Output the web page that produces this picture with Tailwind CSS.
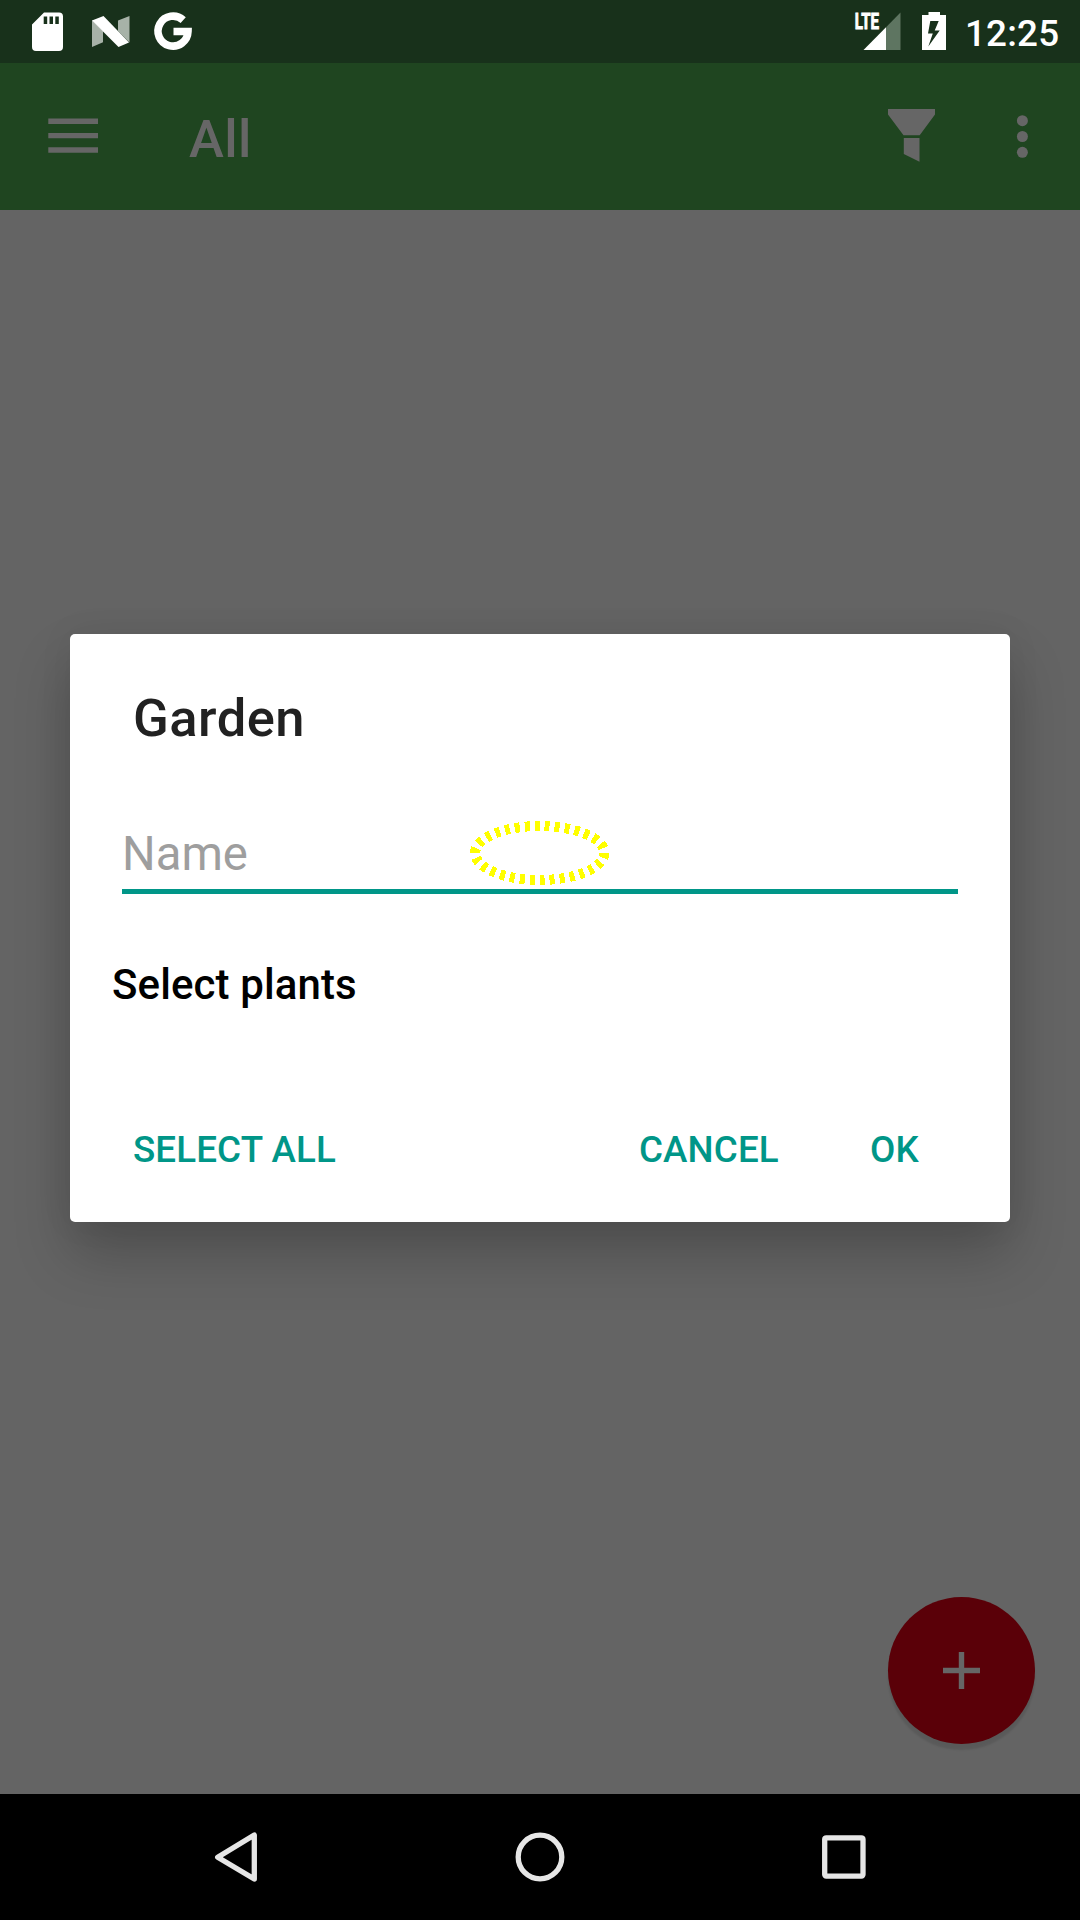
<!DOCTYPE html>
<html lang="en">
<head>
<meta charset="utf-8">
<title>Garden</title>
<script src="https://cdn.jsdelivr.net/npm/@tailwindcss/browser@4"></script>
</head>
<body class="relative flex h-[1920px] w-[1080px] flex-col overflow-hidden bg-[#646464] font-['Roboto',sans-serif]">

<!-- Status bar -->
<div class="flex h-[63px] shrink-0 items-center justify-between bg-[#18311b] text-white">
  <svg class="h-[63px] w-[220px]" viewBox="0 0 220 63">
    <path fill="#fff" fill-rule="evenodd" d="M44 12.5H59a4 4 0 0 1 4 4V47a4 4 0 0 1-4 4H36a4 4 0 0 1-4-4V24.500ZM43.700 16.500V24H47.200V16.500ZM49.500 16.500V24H53V16.500ZM55.300 16.500V24H58.800V16.500Z"/>
    <path fill="#a7b2a8" d="M92 20 103 31V42.300L92 47ZM118 20.500 129.500 16V42.500L118 31Z"/>
    <path fill="#fff" d="M92 20.500 103.500 16 129 42.500 118.500 47Z"/>
    <path fill="none" stroke="#fff" stroke-width="7.600" d="M183.200 20.100A15 15 0 1 0 188 31.500H173.500"/>
  </svg>
  <div class="flex items-center">
    <svg class="h-[63px] w-[120px]" viewBox="840 0 120 63">
      <path fill="#5e7561" d="M886 27.200 900.500 12.500V50H886Z"/>
      <path fill="#fff" d="M863.500 50 886 27.200V50Z"/>
      <text x="854.700" y="29" fill="#fff" stroke="#fff" stroke-width="0.900" font-family="Roboto" font-weight="700" font-size="21.500" textLength="24.300" lengthAdjust="spacingAndGlyphs">LTE</text>
      <path fill="#fff" fill-rule="evenodd" d="M928.500 12H940V15H946V50H922V15H928.500ZM930.300 21 928 33.500H932.800L928.300 46.500 939.700 30.500H934.700L938.700 21Z"/>
    </svg>
    <span class="w-[120px] pt-[5px] pl-[5px] text-[36.75px] leading-[44px] font-medium tracking-[0.2px]">12:25</span>
  </div>
</div>

<!-- App bar -->
<header class="flex h-[147px] shrink-0 items-center bg-[#1f4520] text-[#666]">
  <svg class="h-[147px] w-[189px]" viewBox="0 63 189 147" fill="currentColor">
    <path d="M48.300 118.500H98V124H48.300ZM48.300 133H98V138.300H48.300ZM48.300 147.300H98V152.800H48.300Z"/>
  </svg>
  <h1 class="grow pt-[4px] text-[52.5px] leading-[60px] font-medium tracking-[0.4px]">All</h1>
  <svg class="h-[147px] w-[220px]" viewBox="860 63 220 147" fill="currentColor">
    <path d="M888 109H935V114.500L919.700 135.200H903.500L888 114.500ZM903.800 138H919.500V161.700L903.800 154Z"/>
    <circle cx="1022.400" cy="120.700" r="5.500"/><circle cx="1022.400" cy="136.500" r="5.500"/><circle cx="1022.400" cy="152.300" r="5.500"/>
  </svg>
</header>

<!-- Content behind the dialog -->
<main class="flex grow flex-col items-center pt-[424px]">
  <section class="relative flex h-[588px] w-[940px] shrink-0 flex-col rounded-[5px] bg-white pt-[54px] shadow-[0_32px_56px_rgba(0,0,0,0.22),0_0_36px_rgba(0,0,0,0.06)]">
    <h2 class="pl-[63px] text-[52.5px] leading-[60px] font-medium tracking-[0.5px] text-[#212121]">Garden</h2>
    <div class="mx-[52px] mt-[78px] h-[68px] border-b-[5px] border-[#009688] text-[47.25px] leading-[56px] text-[#9e9e9e]">Name</div>
    <h3 class="mt-[66px] pl-[42px] text-[42px] leading-[50px] font-medium tracking-[0.1px] text-black">Select plants</h3>
    <div class="mt-[118px] flex pl-[63px] text-[36.75px] leading-[44px] font-medium tracking-[0.12px] text-[#009688]">
      <span class="w-[506px]">SELECT ALL</span>
      <span class="w-[231px]">CANCEL</span>
      <span>OK</span>
    </div>
    <!-- Touch highlight over the field -->
    <svg class="absolute top-[180px] left-[390px] h-[80px] w-[160px]" viewBox="460 814 160 80">
      <ellipse cx="539.700" cy="853" rx="64.700" ry="27" pathLength="300" fill="none" stroke="#ff0" stroke-width="10" stroke-dasharray="5 5" shape-rendering="crispEdges"/>
    </svg>
  </section>
  <button class="mt-auto mr-[45px] mb-[50px] flex size-[147px] items-center justify-center self-end rounded-full bg-[#5a0008] shadow-[0_6px_2px_0px_rgba(0,0,0,0.1)]">
    <svg class="size-[37px]" viewBox="0 0 37 37" fill="#666"><path d="M15.800 0H21.200V15.800H37V21.200H21.200V37H15.800V21.200H0V15.800H15.800Z"/></svg>
  </button>
</main>

<!-- Navigation bar -->
<nav class="h-[126px] shrink-0 bg-black">
  <svg class="h-[126px] w-[1080px]" viewBox="0 1794 1080 126" fill="none" stroke="#e6e6e6" stroke-width="5.300" stroke-linejoin="round">
    <path d="M254.300 1835V1879L217.700 1857.200Z"/>
    <circle cx="540" cy="1857" r="21.800"/>
    <rect x="824.700" y="1837.800" width="38.300" height="38.300" rx="1.500"/>
  </svg>
</nav>
</body>
</html>
